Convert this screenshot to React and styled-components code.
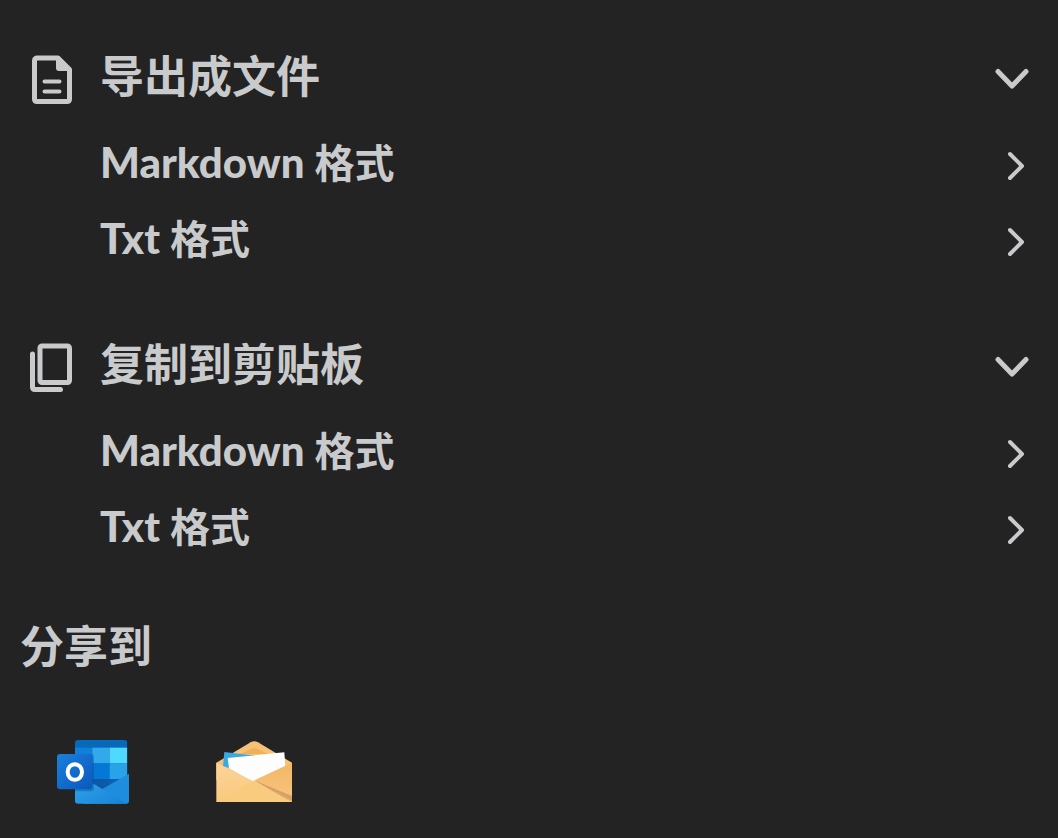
import React, { useState } from 'react';
import styled, { createGlobalStyle } from 'styled-components';

const GlobalStyle = createGlobalStyle`
  *, *::before, *::after { box-sizing: border-box; }
  body {
    margin: 0;
    background: #232323;
    color: #c9cacc;
    font-family: Lato, "Noto Sans CJK SC", sans-serif;
    font-weight: 700;
  }
`;

const Panel = styled.main`
  display: flex;
  flex-direction: column;
  gap: 40px;
  min-height: 100vh;
  padding: 30px 0 32px;
`;

const Group = styled.section`
  display: flex;
  flex-direction: column;
`;

const GroupTitle = styled.h2`
  margin: 0;
  font-size: 44px;
  line-height: 64px;
`;

const RowButton = styled.button`
  display: flex;
  align-items: center;
  width: 100%;
  border: 0;
  background: none;
  color: inherit;
  font: inherit;
  text-align: left;
  cursor: pointer;
`;

const GroupToggle = styled(RowButton)`
  gap: 24px;
  height: 96px;
  padding: 0 24px 0 28px;
`;

const FormatList = styled.ul`
  margin: 0;
  padding: 0;
  list-style: none;
`;

const FormatButton = styled(RowButton)`
  height: 76px;
  padding: 0 24px 0 100px;
  font-size: 40px;
  line-height: 60px;
`;

const Label = styled.span`
  flex: 1;
  padding-bottom: 4px;
`;

const FormatName = styled.span`
  font-size: 42px;
  font-weight: 900;
`;

const Icon = styled.svg`
  display: block;
  flex: none;
  fill: none;
  stroke: currentColor;
  stroke-width: 5px;
  stroke-linecap: round;
  stroke-linejoin: round;
`;

const ShareTitle = styled.h2`
  margin: 0;
  padding: 4px 20px 0;
  font-size: 44px;
  line-height: 72px;
`;

const ShareList = styled.ul`
  display: flex;
  align-items: center;
  gap: 84px;
  margin: 0;
  padding: 57px 56px 0;
  list-style: none;
`;

const ShareLink = styled.a`
  display: block;
`;

const Logo = styled.svg`
  display: block;
`;

const FileIcon = () => (
  <Icon width="48" height="56" viewBox="0 0 48 56" aria-hidden="true">
    <path d="M9.500 8H30L41.500 19.500V49Q41.500 51.500 39 51.500H9Q6.500 51.500 6.500 49V11Q6.500 8 9.500 8Z" />
    <path d="M28 8L41.500 21H31Q28 21 28 18Z" fill="currentColor" stroke="none" />
    <path d="M16.500 31.500H31.500M16.500 41.500H31.500" strokeWidth="4" />
  </Icon>
);

const CopyIcon = () => (
  <Icon width="48" height="56" viewBox="0 0 48 56" aria-hidden="true">
    <rect x="12" y="8" width="29.500" height="36.500" rx="2" />
    <path d="M4.500 16V49Q4.500 51.500 7 51.500H32.500" />
  </Icon>
);

const ChevronDown = () => (
  <Icon width="40" height="40" viewBox="0 0 40 40" aria-hidden="true">
    <path d="M4 13.500L18 28L32 13.500" />
  </Icon>
);

const ChevronRight = () => (
  <Icon width="40" height="40" viewBox="0 0 40 40" aria-hidden="true">
    <path d="M16 10L28 22L16 34" strokeWidth="4" />
  </Icon>
);

const OutlookLogo = () => (
  <Logo width="75" height="66" viewBox="18 27 225 198" aria-hidden="true">
    <defs>
      <linearGradient id="flap" x1="0" y1="0" x2="1" y2="1">
        <stop offset="0" stopColor="#36a9ea" />
        <stop offset="1" stopColor="#1681d8" />
      </linearGradient>
      <linearGradient id="badge" x1="0" y1="0" x2="1" y2="1">
        <stop offset="0" stopColor="#1b80dc" />
        <stop offset="1" stopColor="#0a58bc" />
      </linearGradient>
      <clipPath id="book">
        <rect x="75" y="30" width="157" height="160" rx="9" />
      </clipPath>
    </defs>
    <g clipPath="url(#book)">
      <rect x="75" y="30" width="157" height="160" fill="#0669ba" />
      <rect x="75" y="53" width="52" height="47" fill="#0f7fd8" />
      <rect x="127" y="53" width="52" height="47" fill="#32a9ea" />
      <rect x="179" y="53" width="53" height="47" fill="#50d9ff" />
      <rect x="127" y="100" width="52" height="47" fill="#0578d7" />
      <rect x="179" y="100" width="53" height="47" fill="#29a3e8" />
      <rect x="75" y="147" width="104" height="43" fill="#0c59a8" />
      <rect x="179" y="147" width="53" height="43" fill="#0863b7" />
    </g>
    <path d="M158 176L237 131V213Q237 221 229 221H100Z" fill="#1f8ddd" />
    <path d="M75 128L231 221H84Q75 221 75 212Z" fill="url(#flap)" />
    <path d="M75 72H122Q132 72 132 82V174Q132 184 122 184H75Z" fill="#064b91" opacity=".4" />
    <rect x="21" y="72" width="106" height="106" rx="9" fill="url(#badge)" />
    <ellipse cx="74.500" cy="126" rx="21.500" ry="23.500" fill="none" stroke="#fff" strokeWidth="12" />
  </Logo>
);

const MailLogo = () => (
  <Logo width="80" height="64" viewBox="30 30 240 192" aria-hidden="true">
    <defs>
      <linearGradient id="body" x1="0" y1="0" x2="0" y2="1">
        <stop offset="0" stopColor="#fcd39a" />
        <stop offset="1" stopColor="#f8ca7c" />
      </linearGradient>
      <linearGradient id="side" x1="0" y1="0" x2="0" y2="1">
        <stop offset="0" stopColor="#f2b766" />
        <stop offset="1" stopColor="#f9c481" />
      </linearGradient>
    </defs>
    <path d="M34 98L137 37Q148 31 159 37L261 98V150H34Z" fill="#f7c278" />
    <path d="M105 72L139 56Q148 52 158 57L190 72Z" fill="#f0b156" />
    <path d="M58 66L160 78L150 140L54 108Z" fill="#39a9e2" />
    <path d="M68 84L238 67L241 110L148 158L72 115Z" fill="#fdfdfd" />
    <path d="M34 98L148 155L261 216H34Z" fill="url(#body)" />
    <path d="M261 98L148 151L261 216Z" fill="url(#side)" />
    <path d="M34 216L143 153Q148 149 154 154L261 216Z" fill="#f8cb7e" />
    <path d="M148 151L261 198V213Z" fill="#d9a065" />
  </Logo>
);

const FORMATS = ['Markdown', 'Txt'];

const GROUPS = [
  { title: '导出成文件', GroupIcon: FileIcon },
  { title: '复制到剪贴板', GroupIcon: CopyIcon },
];

const APPS = [
  { name: 'Outlook', AppLogo: OutlookLogo },
  { name: 'Mail', AppLogo: MailLogo },
];

function FormatGroup({ title, GroupIcon }) {
  const [open, setOpen] = useState(true);
  return (
    <Group>
      <GroupTitle>
        <GroupToggle type="button" aria-expanded={open} onClick={() => setOpen(!open)}>
          <GroupIcon />
          <Label>{title}</Label>
          <ChevronDown />
        </GroupToggle>
      </GroupTitle>
      {open && (
        <FormatList>
          {FORMATS.map((format) => (
            <li key={format}>
              <FormatButton type="button">
                <Label>
                  <FormatName>{format} </FormatName>
                  格式
                </Label>
                <ChevronRight />
              </FormatButton>
            </li>
          ))}
        </FormatList>
      )}
    </Group>
  );
}

export default function App() {
  return (
    <>
      <GlobalStyle />
      <Panel lang="zh-CN">
        {GROUPS.map((group) => (
          <FormatGroup key={group.title} {...group} />
        ))}
        <Group>
          <ShareTitle>分享到</ShareTitle>
          <ShareList>
            {APPS.map(({ name, AppLogo }) => (
              <li key={name}>
                <ShareLink href="#" aria-label={name}>
                  <AppLogo />
                </ShareLink>
              </li>
            ))}
          </ShareList>
        </Group>
      </Panel>
    </>
  );
}
